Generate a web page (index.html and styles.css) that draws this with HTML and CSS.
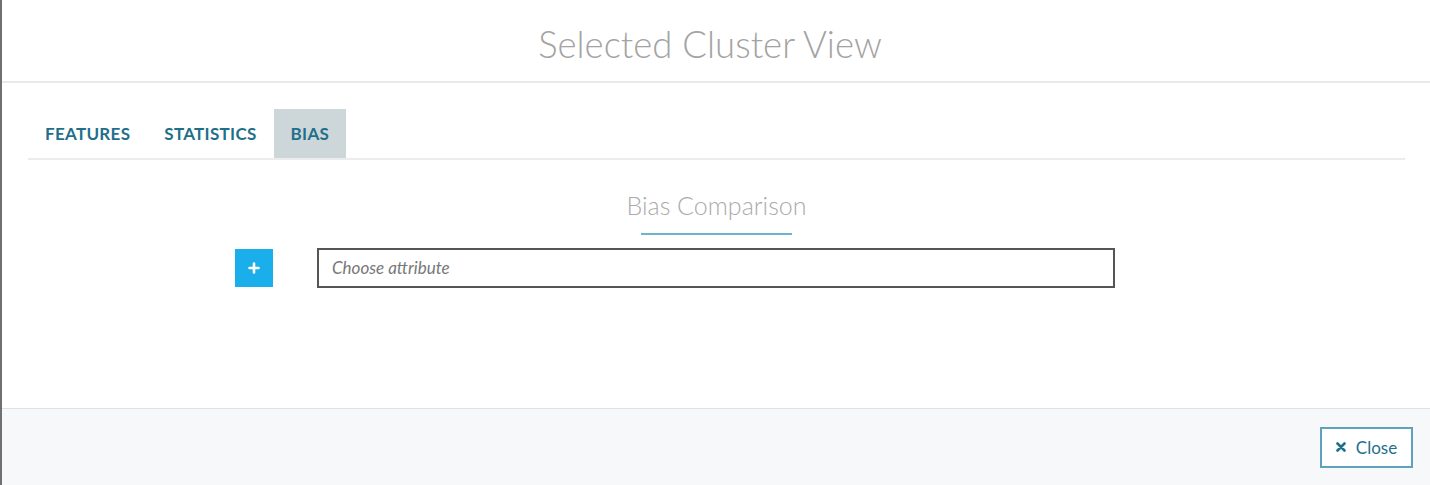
FILE: index.html
```html
<!DOCTYPE html>
<html>
<head>
<link rel="stylesheet" href="styles.css">
</head>

<body>
  <div id="modal" class="border_box">
    <div id="header">
      <h1 class="title">Selected Cluster View</h1>
    </div>

    <div id="body">
      <ul class="tabs">
        <li class="tab">FEATURES</li>
        <li class="tab">STATISTICS</li>
        <li class="tab active">BIAS</li>
      </ul>

      <div id="bias">
        <h2 class="section_title">Bias Comparison</h2>
        <div class="section_rule"></div>
        <div class="attr_row">
          <div class="btn_add">
            <svg width="12" height="12" viewBox="0 0 12 12">
              <path d="M6 1.5v9M1.5 6h9" stroke="#fff" stroke-width="2.6" stroke-linecap="round"/>
            </svg>
          </div>
          <div class="attr_input">Choose attribute</div>
        </div>
      </div>
    </div>

    <div id="footer">
      <div class="btn_close">
        <svg width="10" height="10" viewBox="0 0 10 10">
          <path d="M1.5 1.5l7 7M8.5 1.5l-7 7" stroke="#1f6f8b" stroke-width="2.6" stroke-linecap="round"/>
        </svg>
        <span>Close</span>
      </div>
    </div>
  </div>
</body>
</html>
```

FILE: styles.css
```css
html, body {
  margin: 0;
  padding: 0;
  background-color: white;
  font-family: Lato, "Open Sans", sans-serif;
  -webkit-font-smoothing: antialiased;
}

.border_box {
  box-sizing: border-box;
}

#modal {
  height: 485px;
  display: flex;
  flex-direction: column;
  border-left: 2px solid #707070;
}

#header {
  height: 81px;
  border-bottom: 2px solid #e9e9e9;
  display: flex;
  align-items: center;
  justify-content: center;
  padding-right: 12px;
}

.title {
  margin: 6px 0 0 0;
  font-size: 36.5px;
  font-weight: 300;
  color: #a3a3a3;
}

#body {
  flex: 1;
  padding: 26px 25px 0 26px;
}

.tabs {
  list-style-type: none;
  margin: 0;
  padding: 0;
  display: flex;
  border-bottom: 2px solid #ececec;
}

.tab {
  height: 49px;
  line-height: 49px;
  padding: 0 17px;
  font-size: 17px;
  font-weight: 700;
  color: #1f6f8b;
  letter-spacing: 0.3px;
}

.tab.active {
  background-color: #cdd7da;
}

#bias {
  display: flex;
  flex-direction: column;
  align-items: center;
}

.section_title {
  margin: 30px 0 0 0;
  font-size: 25px;
  font-weight: 300;
  color: #ababab;
}

.section_rule {
  width: 151px;
  height: 2px;
  margin-top: 13px;
  background-color: #6cb3cd;
}

.attr_row {
  align-self: flex-start;
  display: flex;
  align-items: center;
  gap: 44px;
  margin: 13px 0 0 207px;
}

.btn_add {
  width: 38px;
  height: 38px;
  background-color: #1aaeea;
  display: flex;
  align-items: center;
  justify-content: center;
}

.attr_input {
  width: 798px;
  height: 40px;
  box-sizing: border-box;
  border: 2px solid #555555;
  padding: 0 13px;
  line-height: 36px;
  font-size: 17px;
  font-style: italic;
  color: #777777;
}

#footer {
  height: 76px;
  border-top: 1px solid #e1e1e1;
  background-color: #f7f8fa;
  display: flex;
  align-items: center;
  justify-content: flex-end;
  padding-right: 17px;
}

.btn_close {
  width: 93px;
  height: 41px;
  box-sizing: border-box;
  border: 2px solid #5ea3bd;
  background-color: white;
  display: flex;
  align-items: center;
  justify-content: center;
  gap: 10px;
  font-size: 17px;
  color: #1f6f8b;
}
```
